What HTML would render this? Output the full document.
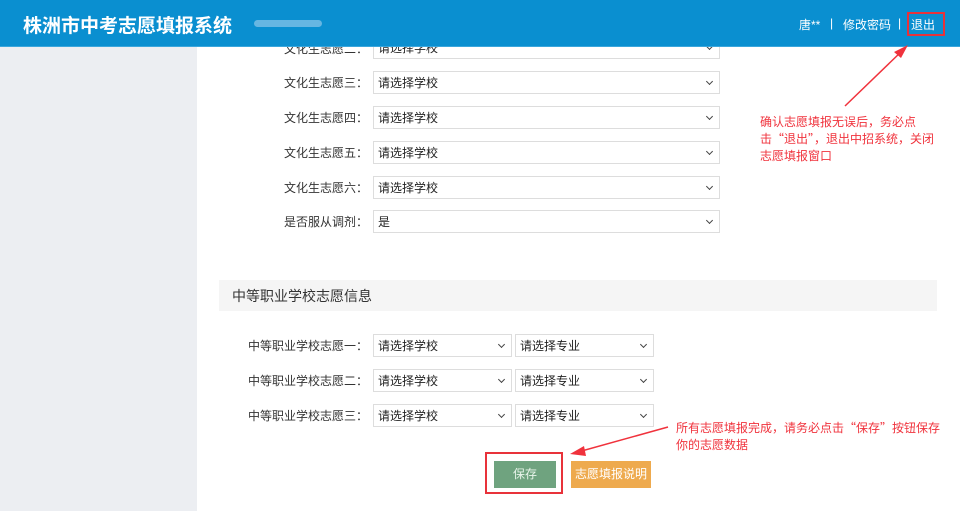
<!DOCTYPE html><html><head><meta charset="utf-8"><style>
*{margin:0;padding:0;box-sizing:border-box}
body{width:960px;height:511px;overflow:hidden;background:#fff;font-family:"Liberation Sans","Noto Sans CJK SC",sans-serif;position:relative;font-size:12px;color:#333}
.hd{position:absolute;left:0;top:0;width:960px;height:47px;background:#0a8fd0;border-bottom:1px solid #3aa6dc;z-index:5}
.side{position:absolute;left:0;top:47px;width:197px;height:464px;background:#eceef2}
.a{position:absolute}
.n{position:absolute;top:16px;color:#fff;font-size:12px}
.lab{position:absolute;text-align:right;font-size:12px;color:#333}
.sel{position:absolute;height:23px;border:1px solid #ddd;background:#fff;font-size:12px;line-height:23px;padding-left:4px;color:#222}
.sel:after{content:"";position:absolute;right:7px;top:7px;width:4px;height:4px;border-right:1.5px solid #444;border-bottom:1.5px solid #444;transform:rotate(45deg)}
.red{color:#f0323c;font-size:12px;line-height:17px;font-family:"Noto Sans CJK SC",sans-serif}
</style></head><body>
<div class="hd">
<div class="a" style="left:23px;top:11px;color:#fff;font-size:19px;font-weight:bold">株洲市中考志愿填报系统</div>
<div class="a" style="left:254px;top:20px;width:68px;height:7px;background:#7dbfe6;border-radius:4px;opacity:.8"></div>
<div class="n" style="left:799px">唐**</div>
<div class="n" style="left:830px">|</div>
<div class="n" style="left:843px">修改密码</div>
<div class="n" style="left:898px">|</div>
<div class="n" style="left:911px">退出</div>
<div class="a" style="left:907px;top:12px;width:38px;height:24px;border:2px solid #e8323a"></div>
</div>
<div class="side"></div>
<div class="lab" style="left:260px;width:108px;top:40px">文化生志愿二：</div><div class="sel" style="left:373px;top:36px;width:347px">请选择学校</div>
<div class="lab" style="left:260px;width:108px;top:74px">文化生志愿三：</div><div class="sel" style="left:373px;top:71px;width:347px">请选择学校</div>
<div class="lab" style="left:260px;width:108px;top:109px">文化生志愿四：</div><div class="sel" style="left:373px;top:106px;width:347px">请选择学校</div>
<div class="lab" style="left:260px;width:108px;top:144px">文化生志愿五：</div><div class="sel" style="left:373px;top:141px;width:347px">请选择学校</div>
<div class="lab" style="left:260px;width:108px;top:179px">文化生志愿六：</div><div class="sel" style="left:373px;top:176px;width:347px">请选择学校</div>
<div class="lab" style="left:260px;width:108px;top:213px">是否服从调剂：</div><div class="sel" style="left:373px;top:210px;width:347px">是</div>
<div class="a" style="left:219px;top:280px;width:718px;height:31px;background:#f5f5f5"></div>
<div class="a" style="left:232px;top:286px;font-size:14px;color:#333">中等职业学校志愿信息</div>
<div class="lab" style="left:240px;width:128px;top:337px">中等职业学校志愿一：</div><div class="sel" style="left:373px;top:334px;width:139px">请选择学校</div><div class="sel" style="left:515px;top:334px;width:139px">请选择专业</div>
<div class="lab" style="left:240px;width:128px;top:372px">中等职业学校志愿二：</div><div class="sel" style="left:373px;top:369px;width:139px">请选择学校</div><div class="sel" style="left:515px;top:369px;width:139px">请选择专业</div>
<div class="lab" style="left:240px;width:128px;top:407px">中等职业学校志愿三：</div><div class="sel" style="left:373px;top:404px;width:139px">请选择学校</div><div class="sel" style="left:515px;top:404px;width:139px">请选择专业</div>
<div class="a" style="left:485px;top:452px;width:78px;height:42px;border:2px solid #e8323a"></div>
<div class="a" style="left:494px;top:461px;width:62px;height:27px;background:#6fa37f;color:#e8f4ea;text-align:center;line-height:27px;font-size:12px">保存</div>
<div class="a" style="left:571px;top:461px;width:80px;height:27px;background:#eeaa4e;color:#fff;text-align:center;line-height:27px;font-size:12px">志愿填报说明</div>
<div class="a red" style="left:760px;top:113px;width:195px">确认志愿填报无误后，务必点<br>击“退出”，退出中招系统，关闭<br>志愿填报窗口</div>
<div class="a red" style="left:676px;top:419px;width:284px">所有志愿填报完成，请务必点击“保存”按钮保存<br>你的志愿数据</div>
<svg class="a" style="left:0;top:0;z-index:6" width="960" height="511">
<line x1="845" y1="106" x2="903" y2="50" stroke="#f0323c" stroke-width="1.5"/>
<polygon points="908,45 894,52 901,58" fill="#f0323c"/>
<line x1="668" y1="427" x2="578" y2="452" stroke="#f0323c" stroke-width="1.5"/>
<polygon points="570,454 584,446 586,456" fill="#f0323c"/>
</svg>
</body></html>
